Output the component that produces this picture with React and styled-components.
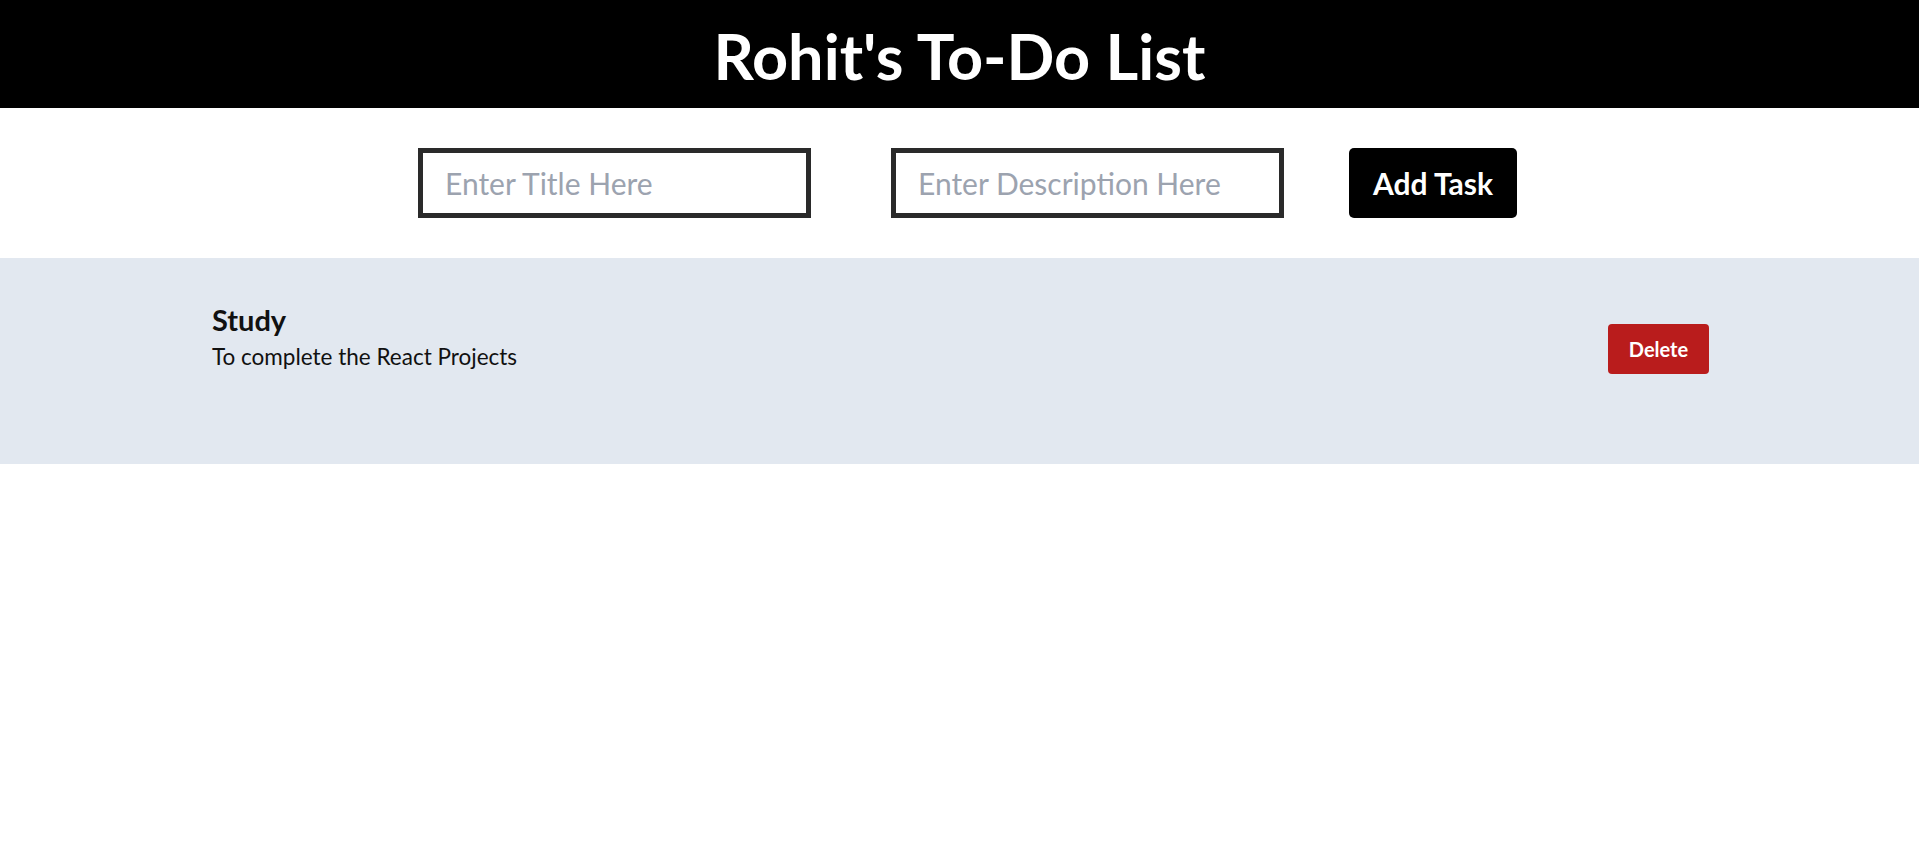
import React, { useState } from 'react'
import styled, { createGlobalStyle } from 'styled-components'

const GlobalStyle = createGlobalStyle`
    body {
        margin: 0;
        font-family: Lato, "Noto Sans", sans-serif;
        background: #fff;
    }
    * {
        box-sizing: border-box;
    }
`;

const Header = styled.header`
    background-color: black;
    height: 108px;
    display: flex;
    align-items: center;
    justify-content: center;
`;

const Title = styled.h1`
    margin: 0;
    color: white;
    font-size: 63px;
    font-weight: 700;
    line-height: 1;
    padding-top: 2px;
`;

const Form = styled.div`
    display: flex;
    justify-content: center;
    align-items: center;
    padding: 40px 0 40px 16px;
`;

const Input = styled.input`
    width: 393px;
    height: 70px;
    border: 5px solid #2a2a2a;
    padding: 0 22px;
    font-family: inherit;
    font-size: 30px;
    color: #111;
    outline: none;
    margin-right: ${props => props.gap}px;
    &::placeholder {
        color: #9ca3af;
    }
`;

const AddButton = styled.button`
    width: 168px;
    height: 70px;
    background-color: black;
    color: white;
    border: none;
    border-radius: 5px;
    font-family: inherit;
    font-size: 30px;
    font-weight: 700;
    cursor: pointer;
`;

const TaskRow = styled.div`
    background-color: #e2e8f0;
    min-height: 206px;
    display: flex;
    justify-content: space-between;
    align-items: flex-start;
    padding: 42px 210px 0 212px;
`;

const TaskInfo = styled.div`
    display: flex;
    flex-direction: column;
`;

const TaskTitle = styled.h3`
    margin: 0;
    font-size: 29px;
    font-weight: 700;
    line-height: 1.4;
    color: #111;
`;

const TaskDesc = styled.p`
    margin: 0;
    font-size: 22.5px;
    line-height: 1.4;
    color: #111;
`;

const DeleteButton = styled.button`
    margin-top: 24px;
    width: 101px;
    height: 50px;
    background-color: #b91c1c;
    color: white;
    border: none;
    border-radius: 4px;
    font-family: inherit;
    font-size: 20px;
    font-weight: 700;
    cursor: pointer;
`;

const App = () => {
    const [title, setTitle] = useState("")
    const [desc, setDesc] = useState("")
    const [tasks, setTasks] = useState([
        { title: "Study", desc: "To complete the React Projects" }
    ])

    const addTask = () => {
        if (!title) return
        setTasks([...tasks, { title, desc }])
        setTitle("")
        setDesc("")
    }

    return (
        <>
            <GlobalStyle />
            <Header>
                <Title>Rohit's To-Do List</Title>
            </Header>
            <Form>
                <Input gap={80} placeholder="Enter Title Here" value={title} onChange={e => setTitle(e.target.value)} />
                <Input gap={65} placeholder="Enter Description Here" value={desc} onChange={e => setDesc(e.target.value)} />
                <AddButton onClick={addTask}>Add Task</AddButton>
            </Form>
            {tasks.map((t, i) => (
                <TaskRow key={i}>
                    <TaskInfo>
                        <TaskTitle>{t.title}</TaskTitle>
                        <TaskDesc>{t.desc}</TaskDesc>
                    </TaskInfo>
                    <DeleteButton onClick={() => setTasks(tasks.filter((_, j) => j !== i))}>Delete</DeleteButton>
                </TaskRow>
            ))}
        </>
    )
}

export default App
